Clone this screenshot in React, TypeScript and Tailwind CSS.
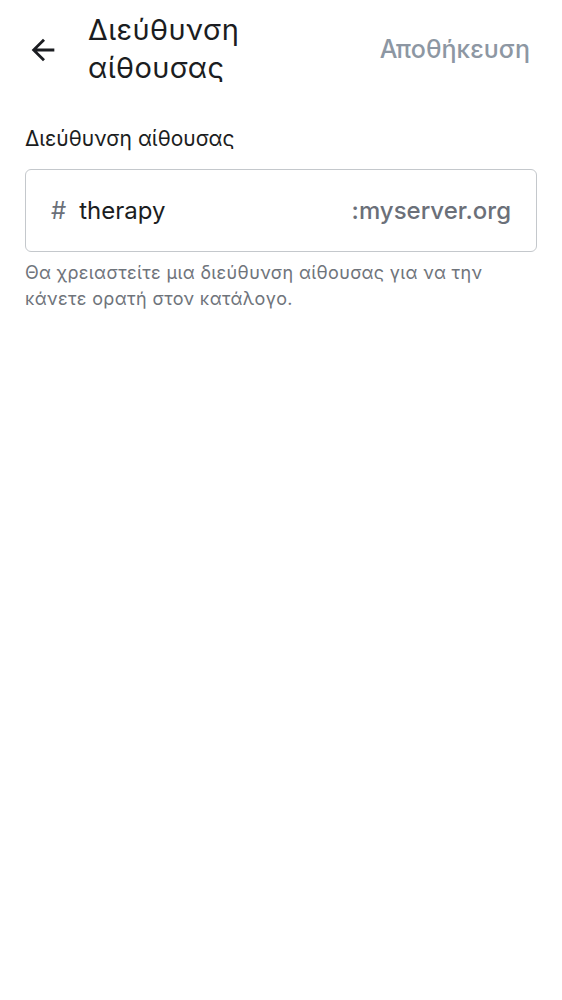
export default function App() {
  return (
    <div className="min-h-screen w-full bg-white font-['Inter',sans-serif] text-[#1b1d21]">
      <header className="flex h-[100px] items-center pl-[26px] pr-[32px]">
        <button className="flex h-[34px] w-[34px] items-center justify-center text-[#1b1d21]">
          <svg viewBox="0 0 24 24" width="34" height="34" fill="currentColor">
            <path d="M20 11H7.83l5.59-5.59L12 4l-8 8 8 8 1.41-1.41L7.83 13H20v-2z" />
          </svg>
        </button>
        <h1 className="ml-[28px] -mt-[2px] flex-1 text-[29px] leading-[38px] tracking-[0.4px] font-normal">
          Διεύθυνση
          <br />
          αίθουσας
        </h1>
        <button className="text-[25px] font-medium text-[#8d97a3]">Αποθήκευση</button>
      </header>

      <main className="px-[25px] pt-[25px]">
        <label className="block text-[21px] leading-[28px] text-[#1b1d21]">Διεύθυνση αίθουσας</label>
        <div className="mt-[16px] flex h-[83px] items-center rounded-[6px] border border-[#c4c8cc] px-[25px] text-[24px]">
          <span className="text-[#6b7079]">#</span>
          <span className="ml-[13px] flex-1 text-[#1b1d21]">therapy</span>
          <span className="font-medium text-[#6b7079]">:myserver.org</span>
        </div>
        <p className="mt-[8px] text-[18px] leading-[26px] tracking-[0.35px] text-[#6f747b]">
          Θα χρειαστείτε μια διεύθυνση αίθουσας για να την
          <br />
          κάνετε ορατή στον κατάλογο.
        </p>
      </main>
    </div>
  );
}
